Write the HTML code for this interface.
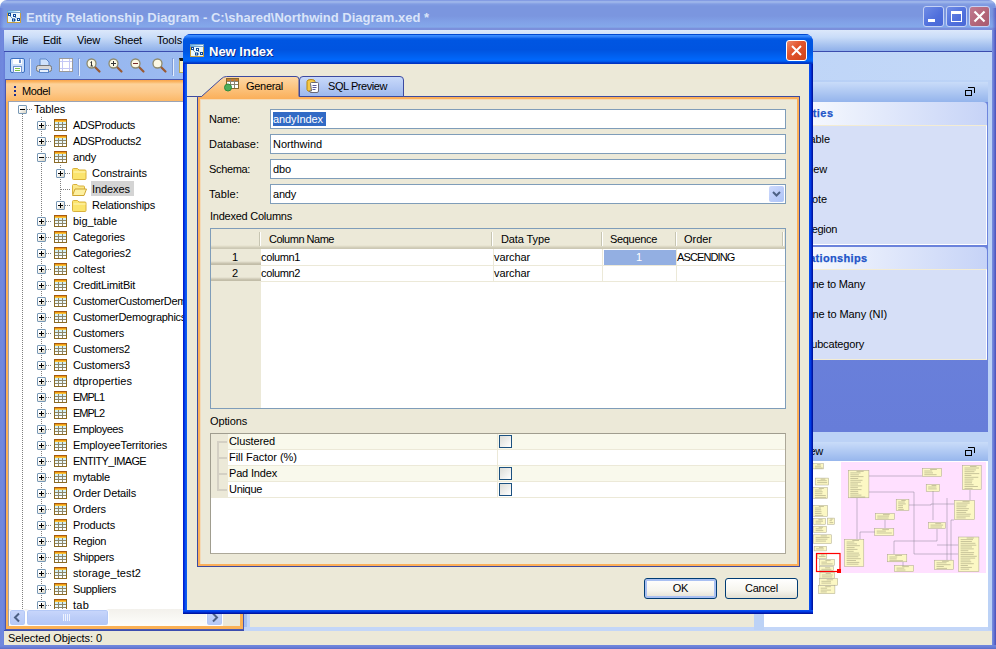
<!DOCTYPE html>
<html><head><meta charset="utf-8"><title>Entity Relationship Diagram</title><style>
*{box-sizing:border-box;margin:0;padding:0}
html,body{width:996px;height:649px;overflow:hidden;background:#fff}
body{font-family:"Liberation Sans",sans-serif;font-size:11px;color:#000;letter-spacing:-0.17px;line-height:13px}
.a{position:absolute}
#root{position:absolute;left:0;top:0;width:996px;height:649px;overflow:hidden;background:#fff}
.t{position:absolute;white-space:pre;height:13px;line-height:13px}
svg{position:absolute;overflow:visible}
</style></head><body><div id="root">
<div class="a" style="left:0px;top:0px;width:996px;height:30px;background:linear-gradient(180deg,#6b83dc 0px,#9db5ea 1px,#9ab2e9 2.5px,#829de3 4px,#7b96df 6px,#7b96df 16px,#81a1e7 22px,#84a8ea 27px,#7b90dc 28.5px,#7a8edb 30px);border-radius:7px 7px 0 0;"></div>
<div class="a" style="left:0px;top:30px;width:5px;height:619px;background:linear-gradient(90deg,#6f86dc,#7088de 50%,#687ed8)"></div>
<div class="a" style="left:992px;top:30px;width:4px;height:619px;background:linear-gradient(90deg,#7a90e0,#6a7bd6 40%,#5560c6 75%,#4a4fb5)"></div>
<div class="a" style="left:0px;top:645px;width:996px;height:4px;background:linear-gradient(180deg,#7088de,#6b80d8 50%,#5a6cc8)"></div>
<div class="a" style="left:992px;top:8px;width:4px;height:22px;background:linear-gradient(90deg,rgba(90,100,200,0),rgba(80,85,190,0.8))"></div>
<div class="a" style="left:0px;top:8px;width:4px;height:22px;background:linear-gradient(90deg,rgba(100,120,215,0.7),rgba(100,120,215,0))"></div>
<svg style="left:7px;top:10px" width="14" height="13" viewBox="0 0 14 13">
<defs><linearGradient id="aig1" x1="0" y1="0" x2="1" y2="0"><stop offset="0" stop-color="#5ab8f0"/><stop offset="1" stop-color="#ffffff"/></linearGradient></defs>
<rect x="0" y="0" width="14" height="3" fill="#6f9fcc"/>
<rect x="1" y="1" width="12" height="1" fill="url(#aig1)"/>
<rect x="0" y="3" width="14" height="10" fill="#c8a040"/>
<rect x="1" y="3" width="12" height="9" fill="#e8f8fc"/>
<path d="M3 6 L6 9 M8 7 L11 9 M8 10 H10" stroke="#2a62a8" stroke-width="1" stroke-dasharray="1 1" fill="none"/>
<rect x="1" y="3" width="3" height="3" fill="#0a4a9c"/><rect x="2" y="4" width="1" height="1" fill="#fff"/>
<rect x="6" y="4" width="3" height="3" fill="#0a4a9c"/><rect x="7" y="5" width="1" height="1" fill="#fff"/>
<rect x="5" y="8.500" width="3" height="3" fill="#0a4a9c"/><rect x="6" y="9.500" width="1" height="1" fill="#fff"/>
<rect x="10" y="8" width="3" height="3" fill="#0a4a9c"/><rect x="11" y="9" width="1" height="1" fill="#fff"/>
</svg>
<div class="t" style="left:26px;top:10px;font-size:13px;font-weight:bold;color:#d9e4f9;letter-spacing:0;height:16px;line-height:16px;">Entity Relationship Diagram - C:\shared\Northwind Diagram.xed *</div>
<div class="a" style="left:923px;top:6px;width:21px;height:21px;background:linear-gradient(135deg,#6f8ce6,#4f6fdc 60%,#4a68d6);border:1px solid #c5d2f5;border-radius:3px;"></div>
<div class="a" style="left:928px;top:19px;width:7px;height:3px;background:#fff"></div>
<div class="a" style="left:946px;top:6px;width:21px;height:21px;background:linear-gradient(135deg,#6f8ce6,#4f6fdc 60%,#4a68d6);border:1px solid #c5d2f5;border-radius:3px;"></div>
<div class="a" style="left:951px;top:11px;width:11px;height:11px;border:1px solid #fff;border-top:3px solid #fff;"></div>
<div class="a" style="left:969px;top:6px;width:21px;height:21px;background:linear-gradient(135deg,#c07a90,#b26478 60%,#a85a70);border:1px solid #c5d2f5;border-radius:3px;"></div>
<svg style="left:974px;top:11px" width="11" height="11" viewBox="0 0 11 11"><path d="M0.5 0.5 L10.5 10.5 M10.5 0.5 L0.5 10.5" stroke="#fff" stroke-width="2.200" fill="none"/></svg>
<div class="a" style="left:4px;top:30px;width:988px;height:21px;background:linear-gradient(180deg,#dce8fb 0%,#c9dcf8 35%,#a9c4f0 70%,#8fb0ea 100%)"></div>
<div class="a" style="left:4px;top:51px;width:988px;height:1px;background:#3b4cae"></div>
<div class="t" style="left:12px;top:34px;letter-spacing:-0.431px;">File</div>
<div class="t" style="left:43px;top:34px;letter-spacing:-0.239px;">Edit</div>
<div class="t" style="left:77px;top:34px;letter-spacing:-0.161px;">View</div>
<div class="t" style="left:114px;top:34px;letter-spacing:-0.149px;">Sheet</div>
<div class="t" style="left:157px;top:34px;letter-spacing:-0.136px;">Tools</div>
<div class="a" style="left:4px;top:52px;width:988px;height:28px;background:linear-gradient(90deg,#90b2ee 0%,#a4c1f2 30%,#bdd4f7 70%,#c3d8f8 100%)"></div>
<div class="a" style="left:4px;top:80px;width:988px;height:550px;background:linear-gradient(90deg,#9dbaf0 0%,#bdd4f7 100%)"></div>
<div class="a" style="left:4px;top:52px;width:1px;height:593px;background:#687ed8"></div>
<svg style="left:10px;top:58px" width="15" height="15" viewBox="0 0 15 15">
<rect x="0.5" y="0.5" width="14" height="14" rx="1.5" fill="#cfe0f8" stroke="#3a6fc0"/>
<rect x="3" y="1" width="9" height="5" fill="#fff"/>
<rect x="9" y="1.5" width="2" height="3.500" fill="#6f93d0"/>
<rect x="3.5" y="8.5" width="8" height="6" fill="#fff" stroke="#6f93d0"/>
<rect x="5" y="10" width="5" height="1" fill="#7fc24a"/><rect x="5" y="12" width="5" height="1" fill="#7fc24a"/>
</svg>
<div class="a" style="left:29px;top:58px;width:1px;height:17px;background:#7f9bd6"></div>
<div class="a" style="left:30px;top:59px;width:1px;height:17px;background:#e6effc"></div>
<svg style="left:36px;top:58px" width="16" height="15" viewBox="0 0 16 15">
<path d="M4 1 h6 l3 3 v4 h-9 z" fill="#cfe2fb" stroke="#5b86c8" stroke-width="1"/>
<rect x="0.5" y="7.5" width="15" height="6" rx="2" fill="#d8d8d8" stroke="#777"/>
<rect x="3.5" y="11.5" width="9" height="3" fill="#e8f0fc" stroke="#5b86c8"/>
</svg>
<svg style="left:59px;top:58px" width="14" height="14" viewBox="0 0 14 14">
<rect x="0.5" y="0.5" width="13" height="13" fill="#fff" stroke="#9a9a9a"/>
<path d="M1 3.5 H13 M1 10.5 H13 M3.500 1 V13 M10.5 1 V13" stroke="#c5c8f5" stroke-width="1"/>
</svg>
<div class="a" style="left:78px;top:58px;width:1px;height:17px;background:#7f9bd6"></div>
<div class="a" style="left:79px;top:59px;width:1px;height:17px;background:#e6effc"></div>
<svg style="left:86px;top:58px" width="15" height="15" viewBox="0 0 15 15">
<path d="M8.500 8.500 L13.500 13.500" stroke="#9a5a32" stroke-width="2.200" stroke-linecap="round"/>
<circle cx="5.500" cy="5.500" r="4.500" fill="#fbf8e4" stroke="#8d8a6e" stroke-width="1.300"/><path d="M4.500 4.500 L5.500 3.500 V8 M4.500 8 H7" stroke="#333" stroke-width="1" fill="none"/></svg>
<svg style="left:108px;top:58px" width="15" height="15" viewBox="0 0 15 15">
<path d="M8.500 8.500 L13.500 13.500" stroke="#9a5a32" stroke-width="2.200" stroke-linecap="round"/>
<circle cx="5.500" cy="5.500" r="4.500" fill="#fbf8e4" stroke="#8d8a6e" stroke-width="1.300"/><path d="M3 5.500 H8 M5.500 3 V8" stroke="#333" stroke-width="1"/></svg>
<svg style="left:130px;top:58px" width="15" height="15" viewBox="0 0 15 15">
<path d="M8.500 8.500 L13.500 13.500" stroke="#9a5a32" stroke-width="2.200" stroke-linecap="round"/>
<circle cx="5.500" cy="5.500" r="4.500" fill="#fbf8e4" stroke="#8d8a6e" stroke-width="1.300"/><path d="M3 5.500 H8" stroke="#7a2a2a" stroke-width="1"/></svg>
<svg style="left:152px;top:58px" width="15" height="15" viewBox="0 0 15 15">
<path d="M8.500 8.500 L13.500 13.500" stroke="#9a5a32" stroke-width="2.200" stroke-linecap="round"/>
<circle cx="5.500" cy="5.500" r="4.500" fill="#fbf8e4" stroke="#8d8a6e" stroke-width="1.300"/></svg>
<div class="a" style="left:172px;top:58px;width:1px;height:17px;background:#7f9bd6"></div>
<div class="a" style="left:173px;top:59px;width:1px;height:17px;background:#e6effc"></div>
<div class="a" style="left:179px;top:58px;width:8px;height:15px;background:#fbf3c0;border:1px solid #b9a85a;border-top:3px solid #111;"></div>
<div class="a" style="left:5px;top:79px;width:239px;height:551px;background:#fbb155;border:1px solid #4a58b0;"></div>
<div class="a" style="left:6px;top:80px;width:237px;height:22px;background:linear-gradient(180deg,#f9a54a 0px,#fbb867 2px,#fdd29a 4px,#fdc98a 12px,#fbb664 22px)"></div>
<div class="a" style="left:14px;top:86px;width:2px;height:2px;background:#1c2c8c"></div>
<div class="a" style="left:14px;top:90px;width:2px;height:2px;background:#1c2c8c"></div>
<div class="a" style="left:14px;top:94px;width:2px;height:2px;background:#1c2c8c"></div>
<div class="t" style="left:22px;top:85px;letter-spacing:-0.392px;">Model</div>
<div class="a" style="left:8px;top:101px;width:232px;height:525px;background:#fff;border:1px solid #9aa3b5;border-right:none"></div>
<div class="a" style="left:9px;top:102px;width:231px;height:507px;overflow:hidden;background:#fff">
<div class="a" style="left:13px;top:12px;width:1px;height:506px;background:repeating-linear-gradient(180deg,#808080 0 1px,transparent 1px 2px)"></div>
<div class="a" style="left:32px;top:15px;width:1px;height:503px;background:repeating-linear-gradient(180deg,#808080 0 1px,transparent 1px 2px)"></div>
<div class="a" style="left:51px;top:63px;width:1px;height:40px;background:repeating-linear-gradient(180deg,#808080 0 1px,transparent 1px 2px)"></div>
<div class="a" style="left:18px;top:7px;width:6px;height:1px;background:repeating-linear-gradient(90deg,#808080 0 1px,transparent 1px 2px)"></div>
<div class="a" style="left:9px;top:3px;width:9px;height:9px;border:1px solid #7898b5;border-radius:1px;background:linear-gradient(135deg,#fff 30%,#d6d2c2)"><div class="a" style="left:1px;top:3px;width:5px;height:1px;background:#000"></div></div>
<div class="t" style="left:25px;top:1px;letter-spacing:-0.133px;">Tables</div>
<div class="a" style="left:37px;top:23px;width:6px;height:1px;background:repeating-linear-gradient(90deg,#808080 0 1px,transparent 1px 2px)"></div>
<div class="a" style="left:28px;top:19px;width:9px;height:9px;border:1px solid #7898b5;border-radius:1px;background:linear-gradient(135deg,#fff 30%,#d6d2c2)"><div class="a" style="left:1px;top:3px;width:5px;height:1px;background:#000"></div><div class="a" style="left:3px;top:1px;width:1px;height:5px;background:#000"></div></div>
<svg style="left:45px;top:17px" width="13" height="12" viewBox="0 0 13 12">
<rect x="0" y="0" width="13" height="12" fill="#8a6a24"/>
<rect x="0" y="0" width="13" height="1" fill="#a85a10"/>
<rect x="1" y="1" width="11" height="1" fill="#ef9a14"/>
<rect x="1" y="2" width="11" height="1" fill="#fcc63a"/>
<rect x="1" y="3" width="11" height="8" fill="#8d8668"/>
<rect x="1" y="3" width="3" height="2" fill="#d2f0f8"/><rect x="5" y="3" width="3" height="2" fill="#d2f0f8"/><rect x="9" y="3" width="3" height="2" fill="#d2f0f8"/>
<rect x="1" y="6" width="3" height="2" fill="#e8f7fb"/><rect x="5" y="6" width="3" height="2" fill="#e8f7fb"/><rect x="9" y="6" width="3" height="2" fill="#e8f7fb"/>
<rect x="1" y="9" width="3" height="2" fill="#fff"/><rect x="5" y="9" width="3" height="2" fill="#fff"/><rect x="9" y="9" width="3" height="2" fill="#fff"/>
</svg>
<div class="t" style="left:64px;top:17px;letter-spacing:-0.366px;">ADSProducts</div>
<div class="a" style="left:37px;top:39px;width:6px;height:1px;background:repeating-linear-gradient(90deg,#808080 0 1px,transparent 1px 2px)"></div>
<div class="a" style="left:28px;top:35px;width:9px;height:9px;border:1px solid #7898b5;border-radius:1px;background:linear-gradient(135deg,#fff 30%,#d6d2c2)"><div class="a" style="left:1px;top:3px;width:5px;height:1px;background:#000"></div><div class="a" style="left:3px;top:1px;width:1px;height:5px;background:#000"></div></div>
<svg style="left:45px;top:33px" width="13" height="12" viewBox="0 0 13 12">
<rect x="0" y="0" width="13" height="12" fill="#8a6a24"/>
<rect x="0" y="0" width="13" height="1" fill="#a85a10"/>
<rect x="1" y="1" width="11" height="1" fill="#ef9a14"/>
<rect x="1" y="2" width="11" height="1" fill="#fcc63a"/>
<rect x="1" y="3" width="11" height="8" fill="#8d8668"/>
<rect x="1" y="3" width="3" height="2" fill="#d2f0f8"/><rect x="5" y="3" width="3" height="2" fill="#d2f0f8"/><rect x="9" y="3" width="3" height="2" fill="#d2f0f8"/>
<rect x="1" y="6" width="3" height="2" fill="#e8f7fb"/><rect x="5" y="6" width="3" height="2" fill="#e8f7fb"/><rect x="9" y="6" width="3" height="2" fill="#e8f7fb"/>
<rect x="1" y="9" width="3" height="2" fill="#fff"/><rect x="5" y="9" width="3" height="2" fill="#fff"/><rect x="9" y="9" width="3" height="2" fill="#fff"/>
</svg>
<div class="t" style="left:64px;top:33px;letter-spacing:-0.345px;">ADSProducts2</div>
<div class="a" style="left:37px;top:55px;width:6px;height:1px;background:repeating-linear-gradient(90deg,#808080 0 1px,transparent 1px 2px)"></div>
<div class="a" style="left:28px;top:51px;width:9px;height:9px;border:1px solid #7898b5;border-radius:1px;background:linear-gradient(135deg,#fff 30%,#d6d2c2)"><div class="a" style="left:1px;top:3px;width:5px;height:1px;background:#000"></div></div>
<svg style="left:45px;top:49px" width="13" height="12" viewBox="0 0 13 12">
<rect x="0" y="0" width="13" height="12" fill="#8a6a24"/>
<rect x="0" y="0" width="13" height="1" fill="#a85a10"/>
<rect x="1" y="1" width="11" height="1" fill="#ef9a14"/>
<rect x="1" y="2" width="11" height="1" fill="#fcc63a"/>
<rect x="1" y="3" width="11" height="8" fill="#8d8668"/>
<rect x="1" y="3" width="3" height="2" fill="#d2f0f8"/><rect x="5" y="3" width="3" height="2" fill="#d2f0f8"/><rect x="9" y="3" width="3" height="2" fill="#d2f0f8"/>
<rect x="1" y="6" width="3" height="2" fill="#e8f7fb"/><rect x="5" y="6" width="3" height="2" fill="#e8f7fb"/><rect x="9" y="6" width="3" height="2" fill="#e8f7fb"/>
<rect x="1" y="9" width="3" height="2" fill="#fff"/><rect x="5" y="9" width="3" height="2" fill="#fff"/><rect x="9" y="9" width="3" height="2" fill="#fff"/>
</svg>
<div class="t" style="left:64px;top:49px;letter-spacing:-0.213px;">andy</div>
<div class="a" style="left:56px;top:71px;width:6px;height:1px;background:repeating-linear-gradient(90deg,#808080 0 1px,transparent 1px 2px)"></div>
<div class="a" style="left:47px;top:67px;width:9px;height:9px;border:1px solid #7898b5;border-radius:1px;background:linear-gradient(135deg,#fff 30%,#d6d2c2)"><div class="a" style="left:1px;top:3px;width:5px;height:1px;background:#000"></div><div class="a" style="left:3px;top:1px;width:1px;height:5px;background:#000"></div></div>
<svg style="left:63px;top:65px" width="15" height="13" viewBox="0 0 15 13">
<path d="M0.5 2.500 q0 -1 1 -1 h4 l1.500 1.500 h6 q1 0 1 1 v7.500 q0 1 -1 1 h-11.500 q-1 0 -1 -1 z" fill="#fbe46c" stroke="#d9b13c"/>
<path d="M1.500 5 h12" stroke="#fff6b8"/>
</svg>
<div class="t" style="left:83px;top:65px;letter-spacing:-0.057px;">Constraints</div>
<div class="a" style="left:52px;top:87px;width:10px;height:1px;background:repeating-linear-gradient(90deg,#808080 0 1px,transparent 1px 2px)"></div>
<svg style="left:62px;top:81px" width="16" height="13" viewBox="0 0 16 13">
<path d="M1.500 11.500 v-9 q0 -1 1 -1 h3.500 l1.500 1.500 h5 q1 0 1 1 v2" fill="#fbe88a" stroke="#d9b13c"/>
<path d="M1.500 12.500 l2.500 -6.500 h11.500 l-2.500 6.500 z" fill="#fdf0a0" stroke="#cfa632"/>
</svg>
<div class="t" style="left:83px;top:81px;background:#d4d4d4;padding:0 4px 0 1px;margin-left:-1px;height:15px;line-height:17px;margin-top:-2px;overflow:hidden;letter-spacing:-0.075px;">Indexes</div>
<div class="a" style="left:56px;top:103px;width:6px;height:1px;background:repeating-linear-gradient(90deg,#808080 0 1px,transparent 1px 2px)"></div>
<div class="a" style="left:47px;top:99px;width:9px;height:9px;border:1px solid #7898b5;border-radius:1px;background:linear-gradient(135deg,#fff 30%,#d6d2c2)"><div class="a" style="left:1px;top:3px;width:5px;height:1px;background:#000"></div><div class="a" style="left:3px;top:1px;width:1px;height:5px;background:#000"></div></div>
<svg style="left:63px;top:97px" width="15" height="13" viewBox="0 0 15 13">
<path d="M0.5 2.500 q0 -1 1 -1 h4 l1.500 1.500 h6 q1 0 1 1 v7.500 q0 1 -1 1 h-11.500 q-1 0 -1 -1 z" fill="#fbe46c" stroke="#d9b13c"/>
<path d="M1.500 5 h12" stroke="#fff6b8"/>
</svg>
<div class="t" style="left:83px;top:97px;letter-spacing:-0.233px;">Relationships</div>
<div class="a" style="left:37px;top:119px;width:6px;height:1px;background:repeating-linear-gradient(90deg,#808080 0 1px,transparent 1px 2px)"></div>
<div class="a" style="left:28px;top:115px;width:9px;height:9px;border:1px solid #7898b5;border-radius:1px;background:linear-gradient(135deg,#fff 30%,#d6d2c2)"><div class="a" style="left:1px;top:3px;width:5px;height:1px;background:#000"></div><div class="a" style="left:3px;top:1px;width:1px;height:5px;background:#000"></div></div>
<svg style="left:45px;top:113px" width="13" height="12" viewBox="0 0 13 12">
<rect x="0" y="0" width="13" height="12" fill="#8a6a24"/>
<rect x="0" y="0" width="13" height="1" fill="#a85a10"/>
<rect x="1" y="1" width="11" height="1" fill="#ef9a14"/>
<rect x="1" y="2" width="11" height="1" fill="#fcc63a"/>
<rect x="1" y="3" width="11" height="8" fill="#8d8668"/>
<rect x="1" y="3" width="3" height="2" fill="#d2f0f8"/><rect x="5" y="3" width="3" height="2" fill="#d2f0f8"/><rect x="9" y="3" width="3" height="2" fill="#d2f0f8"/>
<rect x="1" y="6" width="3" height="2" fill="#e8f7fb"/><rect x="5" y="6" width="3" height="2" fill="#e8f7fb"/><rect x="9" y="6" width="3" height="2" fill="#e8f7fb"/>
<rect x="1" y="9" width="3" height="2" fill="#fff"/><rect x="5" y="9" width="3" height="2" fill="#fff"/><rect x="9" y="9" width="3" height="2" fill="#fff"/>
</svg>
<div class="t" style="left:64px;top:113px;letter-spacing:-0.072px;">big_table</div>
<div class="a" style="left:37px;top:135px;width:6px;height:1px;background:repeating-linear-gradient(90deg,#808080 0 1px,transparent 1px 2px)"></div>
<div class="a" style="left:28px;top:131px;width:9px;height:9px;border:1px solid #7898b5;border-radius:1px;background:linear-gradient(135deg,#fff 30%,#d6d2c2)"><div class="a" style="left:1px;top:3px;width:5px;height:1px;background:#000"></div><div class="a" style="left:3px;top:1px;width:1px;height:5px;background:#000"></div></div>
<svg style="left:45px;top:129px" width="13" height="12" viewBox="0 0 13 12">
<rect x="0" y="0" width="13" height="12" fill="#8a6a24"/>
<rect x="0" y="0" width="13" height="1" fill="#a85a10"/>
<rect x="1" y="1" width="11" height="1" fill="#ef9a14"/>
<rect x="1" y="2" width="11" height="1" fill="#fcc63a"/>
<rect x="1" y="3" width="11" height="8" fill="#8d8668"/>
<rect x="1" y="3" width="3" height="2" fill="#d2f0f8"/><rect x="5" y="3" width="3" height="2" fill="#d2f0f8"/><rect x="9" y="3" width="3" height="2" fill="#d2f0f8"/>
<rect x="1" y="6" width="3" height="2" fill="#e8f7fb"/><rect x="5" y="6" width="3" height="2" fill="#e8f7fb"/><rect x="9" y="6" width="3" height="2" fill="#e8f7fb"/>
<rect x="1" y="9" width="3" height="2" fill="#fff"/><rect x="5" y="9" width="3" height="2" fill="#fff"/><rect x="9" y="9" width="3" height="2" fill="#fff"/>
</svg>
<div class="t" style="left:64px;top:129px;letter-spacing:-0.119px;">Categories</div>
<div class="a" style="left:37px;top:151px;width:6px;height:1px;background:repeating-linear-gradient(90deg,#808080 0 1px,transparent 1px 2px)"></div>
<div class="a" style="left:28px;top:147px;width:9px;height:9px;border:1px solid #7898b5;border-radius:1px;background:linear-gradient(135deg,#fff 30%,#d6d2c2)"><div class="a" style="left:1px;top:3px;width:5px;height:1px;background:#000"></div><div class="a" style="left:3px;top:1px;width:1px;height:5px;background:#000"></div></div>
<svg style="left:45px;top:145px" width="13" height="12" viewBox="0 0 13 12">
<rect x="0" y="0" width="13" height="12" fill="#8a6a24"/>
<rect x="0" y="0" width="13" height="1" fill="#a85a10"/>
<rect x="1" y="1" width="11" height="1" fill="#ef9a14"/>
<rect x="1" y="2" width="11" height="1" fill="#fcc63a"/>
<rect x="1" y="3" width="11" height="8" fill="#8d8668"/>
<rect x="1" y="3" width="3" height="2" fill="#d2f0f8"/><rect x="5" y="3" width="3" height="2" fill="#d2f0f8"/><rect x="9" y="3" width="3" height="2" fill="#d2f0f8"/>
<rect x="1" y="6" width="3" height="2" fill="#e8f7fb"/><rect x="5" y="6" width="3" height="2" fill="#e8f7fb"/><rect x="9" y="6" width="3" height="2" fill="#e8f7fb"/>
<rect x="1" y="9" width="3" height="2" fill="#fff"/><rect x="5" y="9" width="3" height="2" fill="#fff"/><rect x="9" y="9" width="3" height="2" fill="#fff"/>
</svg>
<div class="t" style="left:64px;top:145px;letter-spacing:-0.119px;">Categories2</div>
<div class="a" style="left:37px;top:167px;width:6px;height:1px;background:repeating-linear-gradient(90deg,#808080 0 1px,transparent 1px 2px)"></div>
<div class="a" style="left:28px;top:163px;width:9px;height:9px;border:1px solid #7898b5;border-radius:1px;background:linear-gradient(135deg,#fff 30%,#d6d2c2)"><div class="a" style="left:1px;top:3px;width:5px;height:1px;background:#000"></div><div class="a" style="left:3px;top:1px;width:1px;height:5px;background:#000"></div></div>
<svg style="left:45px;top:161px" width="13" height="12" viewBox="0 0 13 12">
<rect x="0" y="0" width="13" height="12" fill="#8a6a24"/>
<rect x="0" y="0" width="13" height="1" fill="#a85a10"/>
<rect x="1" y="1" width="11" height="1" fill="#ef9a14"/>
<rect x="1" y="2" width="11" height="1" fill="#fcc63a"/>
<rect x="1" y="3" width="11" height="8" fill="#8d8668"/>
<rect x="1" y="3" width="3" height="2" fill="#d2f0f8"/><rect x="5" y="3" width="3" height="2" fill="#d2f0f8"/><rect x="9" y="3" width="3" height="2" fill="#d2f0f8"/>
<rect x="1" y="6" width="3" height="2" fill="#e8f7fb"/><rect x="5" y="6" width="3" height="2" fill="#e8f7fb"/><rect x="9" y="6" width="3" height="2" fill="#e8f7fb"/>
<rect x="1" y="9" width="3" height="2" fill="#fff"/><rect x="5" y="9" width="3" height="2" fill="#fff"/><rect x="9" y="9" width="3" height="2" fill="#fff"/>
</svg>
<div class="t" style="left:64px;top:161px;letter-spacing:0.030px;">coltest</div>
<div class="a" style="left:37px;top:183px;width:6px;height:1px;background:repeating-linear-gradient(90deg,#808080 0 1px,transparent 1px 2px)"></div>
<div class="a" style="left:28px;top:179px;width:9px;height:9px;border:1px solid #7898b5;border-radius:1px;background:linear-gradient(135deg,#fff 30%,#d6d2c2)"><div class="a" style="left:1px;top:3px;width:5px;height:1px;background:#000"></div><div class="a" style="left:3px;top:1px;width:1px;height:5px;background:#000"></div></div>
<svg style="left:45px;top:177px" width="13" height="12" viewBox="0 0 13 12">
<rect x="0" y="0" width="13" height="12" fill="#8a6a24"/>
<rect x="0" y="0" width="13" height="1" fill="#a85a10"/>
<rect x="1" y="1" width="11" height="1" fill="#ef9a14"/>
<rect x="1" y="2" width="11" height="1" fill="#fcc63a"/>
<rect x="1" y="3" width="11" height="8" fill="#8d8668"/>
<rect x="1" y="3" width="3" height="2" fill="#d2f0f8"/><rect x="5" y="3" width="3" height="2" fill="#d2f0f8"/><rect x="9" y="3" width="3" height="2" fill="#d2f0f8"/>
<rect x="1" y="6" width="3" height="2" fill="#e8f7fb"/><rect x="5" y="6" width="3" height="2" fill="#e8f7fb"/><rect x="9" y="6" width="3" height="2" fill="#e8f7fb"/>
<rect x="1" y="9" width="3" height="2" fill="#fff"/><rect x="5" y="9" width="3" height="2" fill="#fff"/><rect x="9" y="9" width="3" height="2" fill="#fff"/>
</svg>
<div class="t" style="left:64px;top:177px;letter-spacing:-0.243px;">CreditLimitBit</div>
<div class="a" style="left:37px;top:199px;width:6px;height:1px;background:repeating-linear-gradient(90deg,#808080 0 1px,transparent 1px 2px)"></div>
<div class="a" style="left:28px;top:195px;width:9px;height:9px;border:1px solid #7898b5;border-radius:1px;background:linear-gradient(135deg,#fff 30%,#d6d2c2)"><div class="a" style="left:1px;top:3px;width:5px;height:1px;background:#000"></div><div class="a" style="left:3px;top:1px;width:1px;height:5px;background:#000"></div></div>
<svg style="left:45px;top:193px" width="13" height="12" viewBox="0 0 13 12">
<rect x="0" y="0" width="13" height="12" fill="#8a6a24"/>
<rect x="0" y="0" width="13" height="1" fill="#a85a10"/>
<rect x="1" y="1" width="11" height="1" fill="#ef9a14"/>
<rect x="1" y="2" width="11" height="1" fill="#fcc63a"/>
<rect x="1" y="3" width="11" height="8" fill="#8d8668"/>
<rect x="1" y="3" width="3" height="2" fill="#d2f0f8"/><rect x="5" y="3" width="3" height="2" fill="#d2f0f8"/><rect x="9" y="3" width="3" height="2" fill="#d2f0f8"/>
<rect x="1" y="6" width="3" height="2" fill="#e8f7fb"/><rect x="5" y="6" width="3" height="2" fill="#e8f7fb"/><rect x="9" y="6" width="3" height="2" fill="#e8f7fb"/>
<rect x="1" y="9" width="3" height="2" fill="#fff"/><rect x="5" y="9" width="3" height="2" fill="#fff"/><rect x="9" y="9" width="3" height="2" fill="#fff"/>
</svg>
<div class="t" style="left:64px;top:193px;letter-spacing:-0.285px;">CustomerCustomerDemo</div>
<div class="a" style="left:37px;top:215px;width:6px;height:1px;background:repeating-linear-gradient(90deg,#808080 0 1px,transparent 1px 2px)"></div>
<div class="a" style="left:28px;top:211px;width:9px;height:9px;border:1px solid #7898b5;border-radius:1px;background:linear-gradient(135deg,#fff 30%,#d6d2c2)"><div class="a" style="left:1px;top:3px;width:5px;height:1px;background:#000"></div><div class="a" style="left:3px;top:1px;width:1px;height:5px;background:#000"></div></div>
<svg style="left:45px;top:209px" width="13" height="12" viewBox="0 0 13 12">
<rect x="0" y="0" width="13" height="12" fill="#8a6a24"/>
<rect x="0" y="0" width="13" height="1" fill="#a85a10"/>
<rect x="1" y="1" width="11" height="1" fill="#ef9a14"/>
<rect x="1" y="2" width="11" height="1" fill="#fcc63a"/>
<rect x="1" y="3" width="11" height="8" fill="#8d8668"/>
<rect x="1" y="3" width="3" height="2" fill="#d2f0f8"/><rect x="5" y="3" width="3" height="2" fill="#d2f0f8"/><rect x="9" y="3" width="3" height="2" fill="#d2f0f8"/>
<rect x="1" y="6" width="3" height="2" fill="#e8f7fb"/><rect x="5" y="6" width="3" height="2" fill="#e8f7fb"/><rect x="9" y="6" width="3" height="2" fill="#e8f7fb"/>
<rect x="1" y="9" width="3" height="2" fill="#fff"/><rect x="5" y="9" width="3" height="2" fill="#fff"/><rect x="9" y="9" width="3" height="2" fill="#fff"/>
</svg>
<div class="t" style="left:64px;top:209px;letter-spacing:-0.280px;">CustomerDemographics</div>
<div class="a" style="left:37px;top:231px;width:6px;height:1px;background:repeating-linear-gradient(90deg,#808080 0 1px,transparent 1px 2px)"></div>
<div class="a" style="left:28px;top:227px;width:9px;height:9px;border:1px solid #7898b5;border-radius:1px;background:linear-gradient(135deg,#fff 30%,#d6d2c2)"><div class="a" style="left:1px;top:3px;width:5px;height:1px;background:#000"></div><div class="a" style="left:3px;top:1px;width:1px;height:5px;background:#000"></div></div>
<svg style="left:45px;top:225px" width="13" height="12" viewBox="0 0 13 12">
<rect x="0" y="0" width="13" height="12" fill="#8a6a24"/>
<rect x="0" y="0" width="13" height="1" fill="#a85a10"/>
<rect x="1" y="1" width="11" height="1" fill="#ef9a14"/>
<rect x="1" y="2" width="11" height="1" fill="#fcc63a"/>
<rect x="1" y="3" width="11" height="8" fill="#8d8668"/>
<rect x="1" y="3" width="3" height="2" fill="#d2f0f8"/><rect x="5" y="3" width="3" height="2" fill="#d2f0f8"/><rect x="9" y="3" width="3" height="2" fill="#d2f0f8"/>
<rect x="1" y="6" width="3" height="2" fill="#e8f7fb"/><rect x="5" y="6" width="3" height="2" fill="#e8f7fb"/><rect x="9" y="6" width="3" height="2" fill="#e8f7fb"/>
<rect x="1" y="9" width="3" height="2" fill="#fff"/><rect x="5" y="9" width="3" height="2" fill="#fff"/><rect x="9" y="9" width="3" height="2" fill="#fff"/>
</svg>
<div class="t" style="left:64px;top:225px;letter-spacing:-0.242px;">Customers</div>
<div class="a" style="left:37px;top:247px;width:6px;height:1px;background:repeating-linear-gradient(90deg,#808080 0 1px,transparent 1px 2px)"></div>
<div class="a" style="left:28px;top:243px;width:9px;height:9px;border:1px solid #7898b5;border-radius:1px;background:linear-gradient(135deg,#fff 30%,#d6d2c2)"><div class="a" style="left:1px;top:3px;width:5px;height:1px;background:#000"></div><div class="a" style="left:3px;top:1px;width:1px;height:5px;background:#000"></div></div>
<svg style="left:45px;top:241px" width="13" height="12" viewBox="0 0 13 12">
<rect x="0" y="0" width="13" height="12" fill="#8a6a24"/>
<rect x="0" y="0" width="13" height="1" fill="#a85a10"/>
<rect x="1" y="1" width="11" height="1" fill="#ef9a14"/>
<rect x="1" y="2" width="11" height="1" fill="#fcc63a"/>
<rect x="1" y="3" width="11" height="8" fill="#8d8668"/>
<rect x="1" y="3" width="3" height="2" fill="#d2f0f8"/><rect x="5" y="3" width="3" height="2" fill="#d2f0f8"/><rect x="9" y="3" width="3" height="2" fill="#d2f0f8"/>
<rect x="1" y="6" width="3" height="2" fill="#e8f7fb"/><rect x="5" y="6" width="3" height="2" fill="#e8f7fb"/><rect x="9" y="6" width="3" height="2" fill="#e8f7fb"/>
<rect x="1" y="9" width="3" height="2" fill="#fff"/><rect x="5" y="9" width="3" height="2" fill="#fff"/><rect x="9" y="9" width="3" height="2" fill="#fff"/>
</svg>
<div class="t" style="left:64px;top:241px;letter-spacing:-0.229px;">Customers2</div>
<div class="a" style="left:37px;top:263px;width:6px;height:1px;background:repeating-linear-gradient(90deg,#808080 0 1px,transparent 1px 2px)"></div>
<div class="a" style="left:28px;top:259px;width:9px;height:9px;border:1px solid #7898b5;border-radius:1px;background:linear-gradient(135deg,#fff 30%,#d6d2c2)"><div class="a" style="left:1px;top:3px;width:5px;height:1px;background:#000"></div><div class="a" style="left:3px;top:1px;width:1px;height:5px;background:#000"></div></div>
<svg style="left:45px;top:257px" width="13" height="12" viewBox="0 0 13 12">
<rect x="0" y="0" width="13" height="12" fill="#8a6a24"/>
<rect x="0" y="0" width="13" height="1" fill="#a85a10"/>
<rect x="1" y="1" width="11" height="1" fill="#ef9a14"/>
<rect x="1" y="2" width="11" height="1" fill="#fcc63a"/>
<rect x="1" y="3" width="11" height="8" fill="#8d8668"/>
<rect x="1" y="3" width="3" height="2" fill="#d2f0f8"/><rect x="5" y="3" width="3" height="2" fill="#d2f0f8"/><rect x="9" y="3" width="3" height="2" fill="#d2f0f8"/>
<rect x="1" y="6" width="3" height="2" fill="#e8f7fb"/><rect x="5" y="6" width="3" height="2" fill="#e8f7fb"/><rect x="9" y="6" width="3" height="2" fill="#e8f7fb"/>
<rect x="1" y="9" width="3" height="2" fill="#fff"/><rect x="5" y="9" width="3" height="2" fill="#fff"/><rect x="9" y="9" width="3" height="2" fill="#fff"/>
</svg>
<div class="t" style="left:64px;top:257px;letter-spacing:-0.229px;">Customers3</div>
<div class="a" style="left:37px;top:279px;width:6px;height:1px;background:repeating-linear-gradient(90deg,#808080 0 1px,transparent 1px 2px)"></div>
<div class="a" style="left:28px;top:275px;width:9px;height:9px;border:1px solid #7898b5;border-radius:1px;background:linear-gradient(135deg,#fff 30%,#d6d2c2)"><div class="a" style="left:1px;top:3px;width:5px;height:1px;background:#000"></div><div class="a" style="left:3px;top:1px;width:1px;height:5px;background:#000"></div></div>
<svg style="left:45px;top:273px" width="13" height="12" viewBox="0 0 13 12">
<rect x="0" y="0" width="13" height="12" fill="#8a6a24"/>
<rect x="0" y="0" width="13" height="1" fill="#a85a10"/>
<rect x="1" y="1" width="11" height="1" fill="#ef9a14"/>
<rect x="1" y="2" width="11" height="1" fill="#fcc63a"/>
<rect x="1" y="3" width="11" height="8" fill="#8d8668"/>
<rect x="1" y="3" width="3" height="2" fill="#d2f0f8"/><rect x="5" y="3" width="3" height="2" fill="#d2f0f8"/><rect x="9" y="3" width="3" height="2" fill="#d2f0f8"/>
<rect x="1" y="6" width="3" height="2" fill="#e8f7fb"/><rect x="5" y="6" width="3" height="2" fill="#e8f7fb"/><rect x="9" y="6" width="3" height="2" fill="#e8f7fb"/>
<rect x="1" y="9" width="3" height="2" fill="#fff"/><rect x="5" y="9" width="3" height="2" fill="#fff"/><rect x="9" y="9" width="3" height="2" fill="#fff"/>
</svg>
<div class="t" style="left:64px;top:273px;letter-spacing:0.076px;">dtproperties</div>
<div class="a" style="left:37px;top:295px;width:6px;height:1px;background:repeating-linear-gradient(90deg,#808080 0 1px,transparent 1px 2px)"></div>
<div class="a" style="left:28px;top:291px;width:9px;height:9px;border:1px solid #7898b5;border-radius:1px;background:linear-gradient(135deg,#fff 30%,#d6d2c2)"><div class="a" style="left:1px;top:3px;width:5px;height:1px;background:#000"></div><div class="a" style="left:3px;top:1px;width:1px;height:5px;background:#000"></div></div>
<svg style="left:45px;top:289px" width="13" height="12" viewBox="0 0 13 12">
<rect x="0" y="0" width="13" height="12" fill="#8a6a24"/>
<rect x="0" y="0" width="13" height="1" fill="#a85a10"/>
<rect x="1" y="1" width="11" height="1" fill="#ef9a14"/>
<rect x="1" y="2" width="11" height="1" fill="#fcc63a"/>
<rect x="1" y="3" width="11" height="8" fill="#8d8668"/>
<rect x="1" y="3" width="3" height="2" fill="#d2f0f8"/><rect x="5" y="3" width="3" height="2" fill="#d2f0f8"/><rect x="9" y="3" width="3" height="2" fill="#d2f0f8"/>
<rect x="1" y="6" width="3" height="2" fill="#e8f7fb"/><rect x="5" y="6" width="3" height="2" fill="#e8f7fb"/><rect x="9" y="6" width="3" height="2" fill="#e8f7fb"/>
<rect x="1" y="9" width="3" height="2" fill="#fff"/><rect x="5" y="9" width="3" height="2" fill="#fff"/><rect x="9" y="9" width="3" height="2" fill="#fff"/>
</svg>
<div class="t" style="left:64px;top:289px;letter-spacing:-1.014px;">EMPL1</div>
<div class="a" style="left:37px;top:311px;width:6px;height:1px;background:repeating-linear-gradient(90deg,#808080 0 1px,transparent 1px 2px)"></div>
<div class="a" style="left:28px;top:307px;width:9px;height:9px;border:1px solid #7898b5;border-radius:1px;background:linear-gradient(135deg,#fff 30%,#d6d2c2)"><div class="a" style="left:1px;top:3px;width:5px;height:1px;background:#000"></div><div class="a" style="left:3px;top:1px;width:1px;height:5px;background:#000"></div></div>
<svg style="left:45px;top:305px" width="13" height="12" viewBox="0 0 13 12">
<rect x="0" y="0" width="13" height="12" fill="#8a6a24"/>
<rect x="0" y="0" width="13" height="1" fill="#a85a10"/>
<rect x="1" y="1" width="11" height="1" fill="#ef9a14"/>
<rect x="1" y="2" width="11" height="1" fill="#fcc63a"/>
<rect x="1" y="3" width="11" height="8" fill="#8d8668"/>
<rect x="1" y="3" width="3" height="2" fill="#d2f0f8"/><rect x="5" y="3" width="3" height="2" fill="#d2f0f8"/><rect x="9" y="3" width="3" height="2" fill="#d2f0f8"/>
<rect x="1" y="6" width="3" height="2" fill="#e8f7fb"/><rect x="5" y="6" width="3" height="2" fill="#e8f7fb"/><rect x="9" y="6" width="3" height="2" fill="#e8f7fb"/>
<rect x="1" y="9" width="3" height="2" fill="#fff"/><rect x="5" y="9" width="3" height="2" fill="#fff"/><rect x="9" y="9" width="3" height="2" fill="#fff"/>
</svg>
<div class="t" style="left:64px;top:305px;letter-spacing:-1.014px;">EMPL2</div>
<div class="a" style="left:37px;top:327px;width:6px;height:1px;background:repeating-linear-gradient(90deg,#808080 0 1px,transparent 1px 2px)"></div>
<div class="a" style="left:28px;top:323px;width:9px;height:9px;border:1px solid #7898b5;border-radius:1px;background:linear-gradient(135deg,#fff 30%,#d6d2c2)"><div class="a" style="left:1px;top:3px;width:5px;height:1px;background:#000"></div><div class="a" style="left:3px;top:1px;width:1px;height:5px;background:#000"></div></div>
<svg style="left:45px;top:321px" width="13" height="12" viewBox="0 0 13 12">
<rect x="0" y="0" width="13" height="12" fill="#8a6a24"/>
<rect x="0" y="0" width="13" height="1" fill="#a85a10"/>
<rect x="1" y="1" width="11" height="1" fill="#ef9a14"/>
<rect x="1" y="2" width="11" height="1" fill="#fcc63a"/>
<rect x="1" y="3" width="11" height="8" fill="#8d8668"/>
<rect x="1" y="3" width="3" height="2" fill="#d2f0f8"/><rect x="5" y="3" width="3" height="2" fill="#d2f0f8"/><rect x="9" y="3" width="3" height="2" fill="#d2f0f8"/>
<rect x="1" y="6" width="3" height="2" fill="#e8f7fb"/><rect x="5" y="6" width="3" height="2" fill="#e8f7fb"/><rect x="9" y="6" width="3" height="2" fill="#e8f7fb"/>
<rect x="1" y="9" width="3" height="2" fill="#fff"/><rect x="5" y="9" width="3" height="2" fill="#fff"/><rect x="9" y="9" width="3" height="2" fill="#fff"/>
</svg>
<div class="t" style="left:64px;top:321px;letter-spacing:-0.490px;">Employees</div>
<div class="a" style="left:37px;top:343px;width:6px;height:1px;background:repeating-linear-gradient(90deg,#808080 0 1px,transparent 1px 2px)"></div>
<div class="a" style="left:28px;top:339px;width:9px;height:9px;border:1px solid #7898b5;border-radius:1px;background:linear-gradient(135deg,#fff 30%,#d6d2c2)"><div class="a" style="left:1px;top:3px;width:5px;height:1px;background:#000"></div><div class="a" style="left:3px;top:1px;width:1px;height:5px;background:#000"></div></div>
<svg style="left:45px;top:337px" width="13" height="12" viewBox="0 0 13 12">
<rect x="0" y="0" width="13" height="12" fill="#8a6a24"/>
<rect x="0" y="0" width="13" height="1" fill="#a85a10"/>
<rect x="1" y="1" width="11" height="1" fill="#ef9a14"/>
<rect x="1" y="2" width="11" height="1" fill="#fcc63a"/>
<rect x="1" y="3" width="11" height="8" fill="#8d8668"/>
<rect x="1" y="3" width="3" height="2" fill="#d2f0f8"/><rect x="5" y="3" width="3" height="2" fill="#d2f0f8"/><rect x="9" y="3" width="3" height="2" fill="#d2f0f8"/>
<rect x="1" y="6" width="3" height="2" fill="#e8f7fb"/><rect x="5" y="6" width="3" height="2" fill="#e8f7fb"/><rect x="9" y="6" width="3" height="2" fill="#e8f7fb"/>
<rect x="1" y="9" width="3" height="2" fill="#fff"/><rect x="5" y="9" width="3" height="2" fill="#fff"/><rect x="9" y="9" width="3" height="2" fill="#fff"/>
</svg>
<div class="t" style="left:64px;top:337px;letter-spacing:-0.168px;">EmployeeTerritories</div>
<div class="a" style="left:37px;top:359px;width:6px;height:1px;background:repeating-linear-gradient(90deg,#808080 0 1px,transparent 1px 2px)"></div>
<div class="a" style="left:28px;top:355px;width:9px;height:9px;border:1px solid #7898b5;border-radius:1px;background:linear-gradient(135deg,#fff 30%,#d6d2c2)"><div class="a" style="left:1px;top:3px;width:5px;height:1px;background:#000"></div><div class="a" style="left:3px;top:1px;width:1px;height:5px;background:#000"></div></div>
<svg style="left:45px;top:353px" width="13" height="12" viewBox="0 0 13 12">
<rect x="0" y="0" width="13" height="12" fill="#8a6a24"/>
<rect x="0" y="0" width="13" height="1" fill="#a85a10"/>
<rect x="1" y="1" width="11" height="1" fill="#ef9a14"/>
<rect x="1" y="2" width="11" height="1" fill="#fcc63a"/>
<rect x="1" y="3" width="11" height="8" fill="#8d8668"/>
<rect x="1" y="3" width="3" height="2" fill="#d2f0f8"/><rect x="5" y="3" width="3" height="2" fill="#d2f0f8"/><rect x="9" y="3" width="3" height="2" fill="#d2f0f8"/>
<rect x="1" y="6" width="3" height="2" fill="#e8f7fb"/><rect x="5" y="6" width="3" height="2" fill="#e8f7fb"/><rect x="9" y="6" width="3" height="2" fill="#e8f7fb"/>
<rect x="1" y="9" width="3" height="2" fill="#fff"/><rect x="5" y="9" width="3" height="2" fill="#fff"/><rect x="9" y="9" width="3" height="2" fill="#fff"/>
</svg>
<div class="t" style="left:64px;top:353px;letter-spacing:-0.640px;">ENTITY_IMAGE</div>
<div class="a" style="left:37px;top:375px;width:6px;height:1px;background:repeating-linear-gradient(90deg,#808080 0 1px,transparent 1px 2px)"></div>
<div class="a" style="left:28px;top:371px;width:9px;height:9px;border:1px solid #7898b5;border-radius:1px;background:linear-gradient(135deg,#fff 30%,#d6d2c2)"><div class="a" style="left:1px;top:3px;width:5px;height:1px;background:#000"></div><div class="a" style="left:3px;top:1px;width:1px;height:5px;background:#000"></div></div>
<svg style="left:45px;top:369px" width="13" height="12" viewBox="0 0 13 12">
<rect x="0" y="0" width="13" height="12" fill="#8a6a24"/>
<rect x="0" y="0" width="13" height="1" fill="#a85a10"/>
<rect x="1" y="1" width="11" height="1" fill="#ef9a14"/>
<rect x="1" y="2" width="11" height="1" fill="#fcc63a"/>
<rect x="1" y="3" width="11" height="8" fill="#8d8668"/>
<rect x="1" y="3" width="3" height="2" fill="#d2f0f8"/><rect x="5" y="3" width="3" height="2" fill="#d2f0f8"/><rect x="9" y="3" width="3" height="2" fill="#d2f0f8"/>
<rect x="1" y="6" width="3" height="2" fill="#e8f7fb"/><rect x="5" y="6" width="3" height="2" fill="#e8f7fb"/><rect x="9" y="6" width="3" height="2" fill="#e8f7fb"/>
<rect x="1" y="9" width="3" height="2" fill="#fff"/><rect x="5" y="9" width="3" height="2" fill="#fff"/><rect x="9" y="9" width="3" height="2" fill="#fff"/>
</svg>
<div class="t" style="left:64px;top:369px;letter-spacing:-0.216px;">mytable</div>
<div class="a" style="left:37px;top:391px;width:6px;height:1px;background:repeating-linear-gradient(90deg,#808080 0 1px,transparent 1px 2px)"></div>
<div class="a" style="left:28px;top:387px;width:9px;height:9px;border:1px solid #7898b5;border-radius:1px;background:linear-gradient(135deg,#fff 30%,#d6d2c2)"><div class="a" style="left:1px;top:3px;width:5px;height:1px;background:#000"></div><div class="a" style="left:3px;top:1px;width:1px;height:5px;background:#000"></div></div>
<svg style="left:45px;top:385px" width="13" height="12" viewBox="0 0 13 12">
<rect x="0" y="0" width="13" height="12" fill="#8a6a24"/>
<rect x="0" y="0" width="13" height="1" fill="#a85a10"/>
<rect x="1" y="1" width="11" height="1" fill="#ef9a14"/>
<rect x="1" y="2" width="11" height="1" fill="#fcc63a"/>
<rect x="1" y="3" width="11" height="8" fill="#8d8668"/>
<rect x="1" y="3" width="3" height="2" fill="#d2f0f8"/><rect x="5" y="3" width="3" height="2" fill="#d2f0f8"/><rect x="9" y="3" width="3" height="2" fill="#d2f0f8"/>
<rect x="1" y="6" width="3" height="2" fill="#e8f7fb"/><rect x="5" y="6" width="3" height="2" fill="#e8f7fb"/><rect x="9" y="6" width="3" height="2" fill="#e8f7fb"/>
<rect x="1" y="9" width="3" height="2" fill="#fff"/><rect x="5" y="9" width="3" height="2" fill="#fff"/><rect x="9" y="9" width="3" height="2" fill="#fff"/>
</svg>
<div class="t" style="left:64px;top:385px;letter-spacing:-0.138px;">Order Details</div>
<div class="a" style="left:37px;top:407px;width:6px;height:1px;background:repeating-linear-gradient(90deg,#808080 0 1px,transparent 1px 2px)"></div>
<div class="a" style="left:28px;top:403px;width:9px;height:9px;border:1px solid #7898b5;border-radius:1px;background:linear-gradient(135deg,#fff 30%,#d6d2c2)"><div class="a" style="left:1px;top:3px;width:5px;height:1px;background:#000"></div><div class="a" style="left:3px;top:1px;width:1px;height:5px;background:#000"></div></div>
<svg style="left:45px;top:401px" width="13" height="12" viewBox="0 0 13 12">
<rect x="0" y="0" width="13" height="12" fill="#8a6a24"/>
<rect x="0" y="0" width="13" height="1" fill="#a85a10"/>
<rect x="1" y="1" width="11" height="1" fill="#ef9a14"/>
<rect x="1" y="2" width="11" height="1" fill="#fcc63a"/>
<rect x="1" y="3" width="11" height="8" fill="#8d8668"/>
<rect x="1" y="3" width="3" height="2" fill="#d2f0f8"/><rect x="5" y="3" width="3" height="2" fill="#d2f0f8"/><rect x="9" y="3" width="3" height="2" fill="#d2f0f8"/>
<rect x="1" y="6" width="3" height="2" fill="#e8f7fb"/><rect x="5" y="6" width="3" height="2" fill="#e8f7fb"/><rect x="9" y="6" width="3" height="2" fill="#e8f7fb"/>
<rect x="1" y="9" width="3" height="2" fill="#fff"/><rect x="5" y="9" width="3" height="2" fill="#fff"/><rect x="9" y="9" width="3" height="2" fill="#fff"/>
</svg>
<div class="t" style="left:64px;top:401px;letter-spacing:-0.103px;">Orders</div>
<div class="a" style="left:37px;top:423px;width:6px;height:1px;background:repeating-linear-gradient(90deg,#808080 0 1px,transparent 1px 2px)"></div>
<div class="a" style="left:28px;top:419px;width:9px;height:9px;border:1px solid #7898b5;border-radius:1px;background:linear-gradient(135deg,#fff 30%,#d6d2c2)"><div class="a" style="left:1px;top:3px;width:5px;height:1px;background:#000"></div><div class="a" style="left:3px;top:1px;width:1px;height:5px;background:#000"></div></div>
<svg style="left:45px;top:417px" width="13" height="12" viewBox="0 0 13 12">
<rect x="0" y="0" width="13" height="12" fill="#8a6a24"/>
<rect x="0" y="0" width="13" height="1" fill="#a85a10"/>
<rect x="1" y="1" width="11" height="1" fill="#ef9a14"/>
<rect x="1" y="2" width="11" height="1" fill="#fcc63a"/>
<rect x="1" y="3" width="11" height="8" fill="#8d8668"/>
<rect x="1" y="3" width="3" height="2" fill="#d2f0f8"/><rect x="5" y="3" width="3" height="2" fill="#d2f0f8"/><rect x="9" y="3" width="3" height="2" fill="#d2f0f8"/>
<rect x="1" y="6" width="3" height="2" fill="#e8f7fb"/><rect x="5" y="6" width="3" height="2" fill="#e8f7fb"/><rect x="9" y="6" width="3" height="2" fill="#e8f7fb"/>
<rect x="1" y="9" width="3" height="2" fill="#fff"/><rect x="5" y="9" width="3" height="2" fill="#fff"/><rect x="9" y="9" width="3" height="2" fill="#fff"/>
</svg>
<div class="t" style="left:64px;top:417px;letter-spacing:-0.176px;">Products</div>
<div class="a" style="left:37px;top:439px;width:6px;height:1px;background:repeating-linear-gradient(90deg,#808080 0 1px,transparent 1px 2px)"></div>
<div class="a" style="left:28px;top:435px;width:9px;height:9px;border:1px solid #7898b5;border-radius:1px;background:linear-gradient(135deg,#fff 30%,#d6d2c2)"><div class="a" style="left:1px;top:3px;width:5px;height:1px;background:#000"></div><div class="a" style="left:3px;top:1px;width:1px;height:5px;background:#000"></div></div>
<svg style="left:45px;top:433px" width="13" height="12" viewBox="0 0 13 12">
<rect x="0" y="0" width="13" height="12" fill="#8a6a24"/>
<rect x="0" y="0" width="13" height="1" fill="#a85a10"/>
<rect x="1" y="1" width="11" height="1" fill="#ef9a14"/>
<rect x="1" y="2" width="11" height="1" fill="#fcc63a"/>
<rect x="1" y="3" width="11" height="8" fill="#8d8668"/>
<rect x="1" y="3" width="3" height="2" fill="#d2f0f8"/><rect x="5" y="3" width="3" height="2" fill="#d2f0f8"/><rect x="9" y="3" width="3" height="2" fill="#d2f0f8"/>
<rect x="1" y="6" width="3" height="2" fill="#e8f7fb"/><rect x="5" y="6" width="3" height="2" fill="#e8f7fb"/><rect x="9" y="6" width="3" height="2" fill="#e8f7fb"/>
<rect x="1" y="9" width="3" height="2" fill="#fff"/><rect x="5" y="9" width="3" height="2" fill="#fff"/><rect x="9" y="9" width="3" height="2" fill="#fff"/>
</svg>
<div class="t" style="left:64px;top:433px;letter-spacing:-0.309px;">Region</div>
<div class="a" style="left:37px;top:455px;width:6px;height:1px;background:repeating-linear-gradient(90deg,#808080 0 1px,transparent 1px 2px)"></div>
<div class="a" style="left:28px;top:451px;width:9px;height:9px;border:1px solid #7898b5;border-radius:1px;background:linear-gradient(135deg,#fff 30%,#d6d2c2)"><div class="a" style="left:1px;top:3px;width:5px;height:1px;background:#000"></div><div class="a" style="left:3px;top:1px;width:1px;height:5px;background:#000"></div></div>
<svg style="left:45px;top:449px" width="13" height="12" viewBox="0 0 13 12">
<rect x="0" y="0" width="13" height="12" fill="#8a6a24"/>
<rect x="0" y="0" width="13" height="1" fill="#a85a10"/>
<rect x="1" y="1" width="11" height="1" fill="#ef9a14"/>
<rect x="1" y="2" width="11" height="1" fill="#fcc63a"/>
<rect x="1" y="3" width="11" height="8" fill="#8d8668"/>
<rect x="1" y="3" width="3" height="2" fill="#d2f0f8"/><rect x="5" y="3" width="3" height="2" fill="#d2f0f8"/><rect x="9" y="3" width="3" height="2" fill="#d2f0f8"/>
<rect x="1" y="6" width="3" height="2" fill="#e8f7fb"/><rect x="5" y="6" width="3" height="2" fill="#e8f7fb"/><rect x="9" y="6" width="3" height="2" fill="#e8f7fb"/>
<rect x="1" y="9" width="3" height="2" fill="#fff"/><rect x="5" y="9" width="3" height="2" fill="#fff"/><rect x="9" y="9" width="3" height="2" fill="#fff"/>
</svg>
<div class="t" style="left:64px;top:449px;letter-spacing:-0.302px;">Shippers</div>
<div class="a" style="left:37px;top:471px;width:6px;height:1px;background:repeating-linear-gradient(90deg,#808080 0 1px,transparent 1px 2px)"></div>
<div class="a" style="left:28px;top:467px;width:9px;height:9px;border:1px solid #7898b5;border-radius:1px;background:linear-gradient(135deg,#fff 30%,#d6d2c2)"><div class="a" style="left:1px;top:3px;width:5px;height:1px;background:#000"></div><div class="a" style="left:3px;top:1px;width:1px;height:5px;background:#000"></div></div>
<svg style="left:45px;top:465px" width="13" height="12" viewBox="0 0 13 12">
<rect x="0" y="0" width="13" height="12" fill="#8a6a24"/>
<rect x="0" y="0" width="13" height="1" fill="#a85a10"/>
<rect x="1" y="1" width="11" height="1" fill="#ef9a14"/>
<rect x="1" y="2" width="11" height="1" fill="#fcc63a"/>
<rect x="1" y="3" width="11" height="8" fill="#8d8668"/>
<rect x="1" y="3" width="3" height="2" fill="#d2f0f8"/><rect x="5" y="3" width="3" height="2" fill="#d2f0f8"/><rect x="9" y="3" width="3" height="2" fill="#d2f0f8"/>
<rect x="1" y="6" width="3" height="2" fill="#e8f7fb"/><rect x="5" y="6" width="3" height="2" fill="#e8f7fb"/><rect x="9" y="6" width="3" height="2" fill="#e8f7fb"/>
<rect x="1" y="9" width="3" height="2" fill="#fff"/><rect x="5" y="9" width="3" height="2" fill="#fff"/><rect x="9" y="9" width="3" height="2" fill="#fff"/>
</svg>
<div class="t" style="left:64px;top:465px;letter-spacing:0.104px;">storage_test2</div>
<div class="a" style="left:37px;top:487px;width:6px;height:1px;background:repeating-linear-gradient(90deg,#808080 0 1px,transparent 1px 2px)"></div>
<div class="a" style="left:28px;top:483px;width:9px;height:9px;border:1px solid #7898b5;border-radius:1px;background:linear-gradient(135deg,#fff 30%,#d6d2c2)"><div class="a" style="left:1px;top:3px;width:5px;height:1px;background:#000"></div><div class="a" style="left:3px;top:1px;width:1px;height:5px;background:#000"></div></div>
<svg style="left:45px;top:481px" width="13" height="12" viewBox="0 0 13 12">
<rect x="0" y="0" width="13" height="12" fill="#8a6a24"/>
<rect x="0" y="0" width="13" height="1" fill="#a85a10"/>
<rect x="1" y="1" width="11" height="1" fill="#ef9a14"/>
<rect x="1" y="2" width="11" height="1" fill="#fcc63a"/>
<rect x="1" y="3" width="11" height="8" fill="#8d8668"/>
<rect x="1" y="3" width="3" height="2" fill="#d2f0f8"/><rect x="5" y="3" width="3" height="2" fill="#d2f0f8"/><rect x="9" y="3" width="3" height="2" fill="#d2f0f8"/>
<rect x="1" y="6" width="3" height="2" fill="#e8f7fb"/><rect x="5" y="6" width="3" height="2" fill="#e8f7fb"/><rect x="9" y="6" width="3" height="2" fill="#e8f7fb"/>
<rect x="1" y="9" width="3" height="2" fill="#fff"/><rect x="5" y="9" width="3" height="2" fill="#fff"/><rect x="9" y="9" width="3" height="2" fill="#fff"/>
</svg>
<div class="t" style="left:64px;top:481px;letter-spacing:-0.317px;">Suppliers</div>
<div class="a" style="left:37px;top:503px;width:6px;height:1px;background:repeating-linear-gradient(90deg,#808080 0 1px,transparent 1px 2px)"></div>
<div class="a" style="left:28px;top:499px;width:9px;height:9px;border:1px solid #7898b5;border-radius:1px;background:linear-gradient(135deg,#fff 30%,#d6d2c2)"><div class="a" style="left:1px;top:3px;width:5px;height:1px;background:#000"></div><div class="a" style="left:3px;top:1px;width:1px;height:5px;background:#000"></div></div>
<svg style="left:45px;top:497px" width="13" height="12" viewBox="0 0 13 12">
<rect x="0" y="0" width="13" height="12" fill="#8a6a24"/>
<rect x="0" y="0" width="13" height="1" fill="#a85a10"/>
<rect x="1" y="1" width="11" height="1" fill="#ef9a14"/>
<rect x="1" y="2" width="11" height="1" fill="#fcc63a"/>
<rect x="1" y="3" width="11" height="8" fill="#8d8668"/>
<rect x="1" y="3" width="3" height="2" fill="#d2f0f8"/><rect x="5" y="3" width="3" height="2" fill="#d2f0f8"/><rect x="9" y="3" width="3" height="2" fill="#d2f0f8"/>
<rect x="1" y="6" width="3" height="2" fill="#e8f7fb"/><rect x="5" y="6" width="3" height="2" fill="#e8f7fb"/><rect x="9" y="6" width="3" height="2" fill="#e8f7fb"/>
<rect x="1" y="9" width="3" height="2" fill="#fff"/><rect x="5" y="9" width="3" height="2" fill="#fff"/><rect x="9" y="9" width="3" height="2" fill="#fff"/>
</svg>
<div class="t" style="left:64px;top:497px;letter-spacing:0.236px;">tab</div>
</div>
<div class="a" style="left:9px;top:609px;width:231px;height:17px;background:linear-gradient(180deg,#f3f1ec,#fefefb)"></div>
<div class="a" style="left:9px;top:609px;width:17px;height:17px;background:linear-gradient(180deg,#c8d6fb,#b6c9f6);border:1px solid #fff;border-radius:3px;box-shadow:inset 0 0 0 1px #b4c8f6"></div>
<svg style="left:13px;top:613px" width="8" height="9" viewBox="0 0 8 9"><path d="M6 0.5 L2 4.500 L6 8.500" stroke="#4d6185" stroke-width="2" fill="none"/></svg>
<div class="a" style="left:206px;top:609px;width:17px;height:17px;background:linear-gradient(180deg,#c8d6fb,#b6c9f6);border:1px solid #fff;border-radius:3px;box-shadow:inset 0 0 0 1px #b4c8f6"></div>
<svg style="left:211px;top:613px" width="8" height="9" viewBox="0 0 8 9"><path d="M2 0.5 L6 4.500 L2 8.500" stroke="#4d6185" stroke-width="2" fill="none"/></svg>
<div class="a" style="left:26px;top:609px;width:83px;height:17px;background:linear-gradient(180deg,#c9d7fc,#bccdf8 50%,#b4c7f6);border:1px solid #fff;border-radius:3px;box-shadow:inset 0 0 0 1px #b4c8f6"></div>
<div class="a" style="left:63px;top:614px;width:1px;height:7px;background:#eef3fe"></div>
<div class="a" style="left:65px;top:614px;width:1px;height:7px;background:#eef3fe"></div>
<div class="a" style="left:67px;top:614px;width:1px;height:7px;background:#eef3fe"></div>
<div class="a" style="left:69px;top:614px;width:1px;height:7px;background:#eef3fe"></div>
<div class="a" style="left:223px;top:609px;width:17px;height:17px;background:#ece9d8"></div>
<div class="a" style="left:247px;top:80px;width:3px;height:550px;background:#c3d6f8"></div>
<div class="a" style="left:250px;top:83px;width:504px;height:544px;background:#ece9d8"></div>
<div class="a" style="left:244px;top:627px;width:748px;height:4px;background:#c3d6f8"></div>
<div class="a" style="left:754px;top:80px;width:10px;height:550px;background:#bcd2f6"></div>
<div class="a" style="left:764px;top:82px;width:224px;height:20px;background:linear-gradient(180deg,#c9dcf9 0%,#b4ccf4 40%,#94b4ec 100%)"></div>
<svg style="left:965px;top:87px" width="10" height="10" viewBox="0 0 10 10"><path d="M3 0.5 H9.500 V6" stroke="#000" fill="none"/><rect x="0.5" y="3.500" width="6" height="5" fill="none" stroke="#000"/></svg>
<div class="a" style="left:764px;top:102px;width:224px;height:330px;background:linear-gradient(180deg,#6d86dd,#6a81db 60%,#677dd9)"></div>
<div class="a" style="left:764px;top:102px;width:223px;height:23px;background:linear-gradient(90deg,#ffffff 0%,#f0f4fd 30%,#c6d3f7 100%);border-radius:0 4px 0 0"></div>
<div class="t" style="left:790px;top:107px;letter-spacing:0.471px;font-weight:bold;color:#1f55c8;-webkit-text-stroke:0.25px #1f55c8;">Entities</div>
<div class="a" style="left:764px;top:125px;width:223px;height:120px;background:#d6dff7;border:1px solid #fff;border-top-color:#f3ecd3"></div>
<div class="t" style="left:804px;top:133px;letter-spacing:-0.059px;">Table</div>
<div class="t" style="left:804px;top:163px;letter-spacing:-0.161px;">View</div>
<div class="t" style="left:804px;top:193px;letter-spacing:-0.059px;">Note</div>
<div class="t" style="left:804px;top:223px;letter-spacing:-0.309px;">Region</div>
<div class="a" style="left:764px;top:247px;width:223px;height:22px;background:linear-gradient(90deg,#ffffff 0%,#f0f4fd 30%,#c6d3f7 100%);border-radius:0 4px 0 0"></div>
<div class="t" style="left:791px;top:252px;letter-spacing:0.337px;font-weight:bold;color:#1f55c8;-webkit-text-stroke:0.25px #1f55c8;">Relationships</div>
<div class="a" style="left:764px;top:269px;width:223px;height:91px;background:#d6dff7;border:1px solid #fff;border-top-color:#f3ecd3;border-bottom-color:#f3ecd3"></div>
<div class="t" style="left:804px;top:278px;letter-spacing:-0.179px;">One to Many</div>
<div class="t" style="left:804px;top:308px;letter-spacing:-0.085px;">One to Many (NI)</div>
<div class="t" style="left:804px;top:338px;letter-spacing:-0.160px;">Subcategory</div>
<div class="a" style="left:764px;top:432px;width:228px;height:10px;background:#bcd2f6"></div>
<div class="a" style="left:988px;top:80px;width:4px;height:550px;background:#bcd2f6"></div>
<div class="a" style="left:764px;top:442px;width:224px;height:20px;background:linear-gradient(180deg,#c9dcf9 0%,#b4ccf4 40%,#94b4ec 100%)"></div>
<div class="t" style="left:779px;top:445px;letter-spacing:-0.230px;">Overview</div>
<svg style="left:965px;top:447px" width="10" height="10" viewBox="0 0 10 10"><path d="M3 0.5 H9.500 V6" stroke="#000" fill="none"/><rect x="0.5" y="3.500" width="6" height="5" fill="none" stroke="#000"/></svg>
<div class="a" style="left:764px;top:461px;width:224px;height:166px;background:#fff"></div>
<svg style="left:764px;top:461px" width="224" height="166" viewBox="764 461 224 166"><defs><pattern id="tx" width="7" height="1.700" patternUnits="userSpaceOnUse"><rect x="1" y="0.7" width="4.200" height="0.55" fill="#6e6b50" opacity="0.6"/></pattern></defs><rect x="841" y="462" width="145" height="111" fill="#ffe0ff"/><rect x="848.3" y="470.3" width="20.6" height="27.5" fill="#fcf8c4" stroke="#a9a58a" stroke-width="0.5"/><path d="M856.5 471.4 h7.2 M850.3 472.9 h10.2 M850.3 474.8 h8.6 M850.3 476.6 h13.2 M850.3 478.5 h7.9 M850.3 480.3 h12.2 M850.3 482.2 h10.6 M850.3 484.0 h7.7 M850.3 485.9 h11.9 M850.3 487.7 h7.6 M850.3 489.6 h11.2 M850.3 491.4 h7.9 M850.3 493.3 h8.1 M850.3 495.1 h11.1 M850.3 497.0 h14.9" stroke="#5f5c46" stroke-width="0.55" opacity="0.6" fill="none"/><rect x="922.3" y="468.4" width="19.4" height="8.1" fill="#fcf8c4" stroke="#a9a58a" stroke-width="0.5"/><path d="M930.1 469.5 h6.8 M924.3 471.0 h7.9 M924.3 472.9 h8.7 M924.3 474.7 h12.3" stroke="#5f5c46" stroke-width="0.55" opacity="0.6" fill="none"/><rect x="962.5" y="465.4" width="18.7" height="24.3" fill="#fcf8c4" stroke="#a9a58a" stroke-width="0.5"/><path d="M970.0 466.5 h6.5 M964.5 468.0 h14.5 M964.5 469.9 h11.4 M964.5 471.7 h9.9 M964.5 473.6 h14.8 M964.5 475.4 h6.9 M964.5 477.3 h13.8 M964.5 479.1 h9.0 M964.5 481.0 h7.8 M964.5 482.8 h7.5 M964.5 484.7 h9.1 M964.5 486.5 h13.4 M964.5 488.4 h8.1" stroke="#5f5c46" stroke-width="0.55" opacity="0.6" fill="none"/><rect x="926.2" y="484.4" width="13.4" height="7.1" fill="#fcf8c4" stroke="#a9a58a" stroke-width="0.5"/><path d="M931.6 485.5 h4.7 M928.2 487.0 h8.2 M928.2 488.9 h8.5" stroke="#5f5c46" stroke-width="0.55" opacity="0.6" fill="none"/><rect x="896.2" y="499.4" width="12.7" height="11.1" fill="#fcf8c4" stroke="#a9a58a" stroke-width="0.5"/><path d="M901.3 500.5 h4.4 M898.2 502.0 h6.6 M898.2 503.9 h7.6 M898.2 505.7 h4.8 M898.2 507.6 h4.8 M898.2 509.4 h5.6" stroke="#5f5c46" stroke-width="0.55" opacity="0.6" fill="none"/><rect x="954.4" y="500.5" width="20.3" height="19.2" fill="#fcf8c4" stroke="#a9a58a" stroke-width="0.5"/><path d="M962.5 501.6 h7.1 M956.4 503.1 h13.3 M956.4 505.0 h11.0 M956.4 506.8 h10.0 M956.4 508.7 h12.5 M956.4 510.5 h11.2 M956.4 512.4 h9.8 M956.4 514.2 h14.4 M956.4 516.1 h13.5 M956.4 517.9 h9.3" stroke="#5f5c46" stroke-width="0.55" opacity="0.6" fill="none"/><rect x="875.3" y="513.5" width="19.2" height="6.2" fill="#fcf8c4" stroke="#a9a58a" stroke-width="0.5"/><path d="M883.0 514.6 h6.7 M877.3 516.1 h11.7 M877.3 518.0 h11.3" stroke="#5f5c46" stroke-width="0.55" opacity="0.6" fill="none"/><rect x="928.5" y="522.5" width="16.9" height="6.0" fill="#fcf8c4" stroke="#a9a58a" stroke-width="0.5"/><path d="M935.3 523.6 h5.9 M930.5 525.1 h12.6 M930.5 527.0 h11.5" stroke="#5f5c46" stroke-width="0.55" opacity="0.6" fill="none"/><rect x="874.7" y="528.5" width="19.1" height="6.9" fill="#fcf8c4" stroke="#a9a58a" stroke-width="0.5"/><path d="M882.3 529.6 h6.7 M876.7 531.1 h9.2 M876.7 533.0 h15.1" stroke="#5f5c46" stroke-width="0.55" opacity="0.6" fill="none"/><rect x="844.6" y="539.4" width="19.2" height="27.0" fill="#fcf8c4" stroke="#a9a58a" stroke-width="0.5"/><path d="M852.3 540.5 h6.7 M846.6 542.0 h7.7 M846.6 543.9 h10.3 M846.6 545.7 h13.3 M846.6 547.6 h8.0 M846.6 549.4 h10.9 M846.6 551.3 h7.1 M846.6 553.1 h12.5 M846.6 555.0 h13.3 M846.6 556.8 h11.7 M846.6 558.7 h14.3 M846.6 560.5 h9.4 M846.6 562.4 h12.7 M846.6 564.2 h11.9" stroke="#5f5c46" stroke-width="0.55" opacity="0.6" fill="none"/><rect x="958.6" y="537.0" width="20.3" height="34.7" fill="#fcf8c4" stroke="#a9a58a" stroke-width="0.5"/><path d="M966.7 538.1 h7.1 M960.6 539.6 h12.4 M960.6 541.5 h11.3 M960.6 543.3 h14.8 M960.6 545.2 h15.7 M960.6 547.0 h11.4 M960.6 548.9 h13.2 M960.6 550.7 h7.7 M960.6 552.6 h13.5 M960.6 554.4 h13.0 M960.6 556.3 h16.2 M960.6 558.1 h14.6 M960.6 560.0 h9.7 M960.6 561.8 h10.6 M960.6 563.7 h13.2 M960.6 565.5 h7.3 M960.6 567.4 h11.3 M960.6 569.2 h8.6" stroke="#5f5c46" stroke-width="0.55" opacity="0.6" fill="none"/><rect x="887.4" y="554.4" width="19.4" height="7.4" fill="#fcf8c4" stroke="#a9a58a" stroke-width="0.5"/><path d="M895.2 555.5 h6.8 M889.4 557.0 h7.8 M889.4 558.9 h7.3 M889.4 560.7 h13.5" stroke="#5f5c46" stroke-width="0.55" opacity="0.6" fill="none"/><rect x="894.5" y="565.5" width="19.2" height="6.2" fill="#fcf8c4" stroke="#a9a58a" stroke-width="0.5"/><path d="M902.2 566.6 h6.7 M896.5 568.1 h7.8 M896.5 570.0 h8.9" stroke="#5f5c46" stroke-width="0.55" opacity="0.6" fill="none"/><rect x="934.5" y="560.2" width="19.0" height="9.2" fill="#fcf8c4" stroke="#a9a58a" stroke-width="0.5"/><path d="M942.1 561.3 h6.6 M936.5 562.8 h10.0 M936.5 564.7 h14.1 M936.5 566.5 h7.3 M936.5 568.4 h10.5" stroke="#5f5c46" stroke-width="0.55" opacity="0.6" fill="none"/><rect x="812.9" y="463.6" width="10.4" height="5.3" fill="#fcf8c4" stroke="#a9a58a" stroke-width="0.5"/><path d="M817.1 464.7 h3.6 M814.9 466.2 h6.2 M814.9 468.0 h7.8" stroke="#5f5c46" stroke-width="0.55" opacity="0.6" fill="none"/><rect x="815.2" y="478.1" width="13.4" height="6.9" fill="#fcf8c4" stroke="#a9a58a" stroke-width="0.5"/><path d="M820.6 479.2 h4.7 M817.2 480.7 h9.6 M817.2 482.6 h9.9" stroke="#5f5c46" stroke-width="0.55" opacity="0.6" fill="none"/><rect x="812.9" y="487.4" width="14.6" height="10.9" fill="#fcf8c4" stroke="#a9a58a" stroke-width="0.5"/><path d="M818.8 488.5 h5.1 M814.9 490.0 h6.9 M814.9 491.8 h7.8 M814.9 493.7 h7.4 M814.9 495.5 h10.9 M814.9 497.4 h11.4" stroke="#5f5c46" stroke-width="0.55" opacity="0.6" fill="none"/><rect x="812.9" y="505.4" width="14.6" height="10.9" fill="#fcf8c4" stroke="#a9a58a" stroke-width="0.5"/><path d="M818.8 506.5 h5.1 M814.9 508.0 h6.1 M814.9 509.8 h6.3 M814.9 511.7 h6.6 M814.9 513.5 h6.6 M814.9 515.4 h8.3" stroke="#5f5c46" stroke-width="0.55" opacity="0.6" fill="none"/><rect x="813.6" y="518.6" width="12.0" height="5.8" fill="#fcf8c4" stroke="#a9a58a" stroke-width="0.5"/><path d="M818.4 519.7 h4.2 M815.6 521.2 h7.4 M815.6 523.0 h5.6" stroke="#5f5c46" stroke-width="0.55" opacity="0.6" fill="none"/><rect x="827.5" y="518.1" width="6.9" height="6.2" fill="#fcf8c4" stroke="#a9a58a" stroke-width="0.5"/><path d="M830.3 519.2 h2.4 M829.5 520.7 h2.4 M829.5 522.6 h3.7" stroke="#5f5c46" stroke-width="0.55" opacity="0.6" fill="none"/><rect x="813.6" y="526.2" width="12.7" height="6.2" fill="#fcf8c4" stroke="#a9a58a" stroke-width="0.5"/><path d="M818.7 527.3 h4.4 M815.6 528.8 h6.6 M815.6 530.6 h7.7" stroke="#5f5c46" stroke-width="0.55" opacity="0.6" fill="none"/><rect x="813.6" y="534.8" width="17.8" height="8.8" fill="#fcf8c4" stroke="#a9a58a" stroke-width="0.5"/><path d="M820.7 535.9 h6.2 M815.6 537.4 h13.9 M815.6 539.2 h11.8 M815.6 541.1 h10.4" stroke="#5f5c46" stroke-width="0.55" opacity="0.6" fill="none"/><rect x="814.1" y="546.3" width="12.3" height="4.6" fill="#fcf8c4" stroke="#a9a58a" stroke-width="0.5"/><path d="M819.0 547.4 h4.3 M816.1 548.9 h7.7" stroke="#5f5c46" stroke-width="0.55" opacity="0.6" fill="none"/><rect x="817.1" y="553.9" width="9.7" height="4.4" fill="#fcf8c4" stroke="#a9a58a" stroke-width="0.5"/><path d="M821.0 555.0 h3.4 M819.1 556.5 h6.4" stroke="#5f5c46" stroke-width="0.55" opacity="0.6" fill="none"/><rect x="819.4" y="559.5" width="15.0" height="6.0" fill="#fcf8c4" stroke="#a9a58a" stroke-width="0.5"/><path d="M825.4 560.6 h5.3 M821.4 562.1 h5.6 M821.4 563.9 h11.3" stroke="#5f5c46" stroke-width="0.55" opacity="0.6" fill="none"/><rect x="819.4" y="566.7" width="14.3" height="3.9" fill="#fcf8c4" stroke="#a9a58a" stroke-width="0.5"/><path d="M825.1 567.8 h5.0 M821.4 569.3 h10.0" stroke="#5f5c46" stroke-width="0.55" opacity="0.6" fill="none"/><rect x="819.9" y="572.4" width="14.6" height="5.8" fill="#fcf8c4" stroke="#a9a58a" stroke-width="0.5"/><path d="M825.7 573.5 h5.1 M821.9 575.0 h10.8 M821.9 576.9 h10.3" stroke="#5f5c46" stroke-width="0.55" opacity="0.6" fill="none"/><rect x="819.4" y="578.7" width="18.3" height="6.5" fill="#fcf8c4" stroke="#a9a58a" stroke-width="0.5"/><path d="M826.7 579.8 h6.4 M821.4 581.3 h9.6 M821.4 583.1 h9.7" stroke="#5f5c46" stroke-width="0.55" opacity="0.6" fill="none"/><rect x="818.7" y="585.6" width="16.2" height="8.1" fill="#fcf8c4" stroke="#a9a58a" stroke-width="0.5"/><path d="M825.2 586.7 h5.7 M820.7 588.2 h6.4 M820.7 590.1 h10.3 M820.7 591.9 h6.1" stroke="#5f5c46" stroke-width="0.55" opacity="0.6" fill="none"/><path d="M869 476 H922 M857 498 V539 M869 492 H914 V554 H958 M909 505 H931 V504 H954 M933 491 V520 M947 498 V560 M885 520 V528 M860 539 V532 H875 M894 554 V541 H937 V529 M937 545 H958 M951 560 V520 H954 M970 490 V500 M903 562 V566" stroke="#8a8796" stroke-width="0.500" fill="none"/><rect x="816.5" y="553.5" width="23.500" height="18" fill="none" stroke="#f00" stroke-width="1.200"/><rect x="837" y="569" width="4" height="4" fill="#f00"/></svg>
<div class="a" style="left:4px;top:631px;width:988px;height:14px;background:#ece9d8"></div>
<div class="a" style="left:4px;top:630px;width:240px;height:1px;background:#3b4cae"></div>
<div class="t" style="left:8px;top:632px;letter-spacing:-0.073px;">Selected Objects: 0</div>
<div class="a" style="left:183px;top:34px;width:630px;height:580px;background:#0a3fe0;border-radius:8px 8px 0 0;overflow:hidden">
<div class="a" style="left:0;top:0;width:630px;height:30px;background:linear-gradient(180deg,#0048d0 0px,#0048d0 1px,#3a8cff 1.5px,#2a7cf8 3px,#0a5fe8 4.500px,#0056e2 6px,#0054e0 16px,#0060f0 22px,#0068fc 26px,#0058ec 27.5px,#0036c4 29px,#0030c0 30px)"></div>
<div class="a" style="left:0;top:30px;width:4px;height:550px;background:linear-gradient(90deg,#0014c8,#0030e0 30%,#0a50ec 60%,#1262f0)"></div>
<div class="a" style="left:626px;top:30px;width:4px;height:550px;background:linear-gradient(90deg,#0a50f0,#0040e8 35%,#0020c0 70%,#000f8c)"></div>
<div class="a" style="left:0;top:576px;width:630px;height:4px;background:linear-gradient(180deg,#0a50f0,#0040e8 35%,#0020c0 70%,#000f8c)"></div>
<div class="a" style="left:4px;top:30px;width:622px;height:546px;background:#ece9d8"></div>
</div>
<svg style="left:190px;top:44px" width="14" height="13" viewBox="0 0 14 13">
<defs><linearGradient id="aig2" x1="0" y1="0" x2="1" y2="0"><stop offset="0" stop-color="#5ab8f0"/><stop offset="1" stop-color="#ffffff"/></linearGradient></defs>
<rect x="0" y="0" width="14" height="3" fill="#6f9fcc"/>
<rect x="1" y="1" width="12" height="1" fill="url(#aig2)"/>
<rect x="0" y="3" width="14" height="10" fill="#c8a040"/>
<rect x="1" y="3" width="12" height="9" fill="#e8f8fc"/>
<path d="M3 6 L6 9 M8 7 L11 9 M8 10 H10" stroke="#2a62a8" stroke-width="1" stroke-dasharray="1 1" fill="none"/>
<rect x="1" y="3" width="3" height="3" fill="#0a4a9c"/><rect x="2" y="4" width="1" height="1" fill="#fff"/>
<rect x="6" y="4" width="3" height="3" fill="#0a4a9c"/><rect x="7" y="5" width="1" height="1" fill="#fff"/>
<rect x="5" y="8.500" width="3" height="3" fill="#0a4a9c"/><rect x="6" y="9.500" width="1" height="1" fill="#fff"/>
<rect x="10" y="8" width="3" height="3" fill="#0a4a9c"/><rect x="11" y="9" width="1" height="1" fill="#fff"/>
</svg>
<div class="t" style="left:209px;top:44px;font-size:13px;font-weight:bold;color:#fff;letter-spacing:0;height:16px;line-height:16px;text-shadow:1px 1px 0 #0a2a8c">New Index</div>
<div class="a" style="left:786px;top:40px;width:21px;height:21px;background:linear-gradient(135deg,#ee8a6c,#e2562e 40%,#cf4218);border:1px solid #fff;border-radius:3px;"></div>
<svg style="left:791px;top:45px" width="11" height="11" viewBox="0 0 11 11"><path d="M1 1 L10 10 M10 1 L1 10" stroke="#fff" stroke-width="2" fill="none"/></svg>
<div class="a" style="left:197px;top:96px;width:603px;height:471px;background:#ece9d8;border:1px solid #3c4aa0;"></div>
<div class="a" style="left:198px;top:97px;width:601px;height:469px;border:2px solid #fbaf5a;"></div>
<div class="a" style="left:200px;top:99px;width:597px;height:465px;border-left:1px solid #f4d9b6;border-top:1px solid #f4d9b6"></div>
<div class="a" style="left:187px;top:96px;width:11px;height:1px;background:#3c4aa0"></div>
<svg style="left:197px;top:74px" width="215" height="26" viewBox="197 74 215 26">
<defs><linearGradient id="tg" x1="0" y1="0" x2="0" y2="1"><stop offset="0" stop-color="#fdd9a8"/><stop offset="0.5" stop-color="#fcc47f"/><stop offset="1" stop-color="#fbaf5a"/></linearGradient>
<linearGradient id="tb" x1="0" y1="0" x2="0" y2="1"><stop offset="0" stop-color="#c9dafa"/><stop offset="0.5" stop-color="#b4c9f4"/><stop offset="1" stop-color="#9cb8ee"/></linearGradient></defs>
<path d="M299.500 96.500 V80 q0 -3.500 3.500 -3.500 H400 q3.500 0 3.500 3.500 V96.500 z" fill="url(#tb)" stroke="#3c4aa0"/>
<path d="M197.500 96.500 H201.500 L221 79 q2.500 -2.500 5.500 -2.500 H296 q3 0 3 3 V99 H198.500 z" fill="url(#tg)"/>
<path d="M197.500 96.500 H201.500 L221 79 q2.500 -2.500 5.500 -2.500 H296 q3 0 3 3 V96.500" fill="none" stroke="#3c4aa0"/>
</svg>
<svg style="left:224px;top:78px" width="16" height="14" viewBox="0 0 16 14">
<rect x="2.500" y="0.5" width="12" height="10" fill="#fff" stroke="#8a6a2c"/>
<rect x="3" y="1" width="11" height="2" fill="#c97a2a"/>
<path d="M3 3.500 H14 M3 6.500 H14 M6.500 1 V10 M10.500 1 V10" stroke="#8d8470" stroke-width="1" fill="none"/>
<circle cx="4" cy="9.500" r="3.500" fill="#4fae5a" stroke="#2f8a3c"/>
</svg>
<div class="t" style="left:246px;top:80px;letter-spacing:-0.304px;">General</div>
<svg style="left:306px;top:79px" width="14" height="15" viewBox="0 0 14 15">
<path d="M1 2.500 q0 -2 4 -2 q4 0 4 2 v8 q0 2 -4 2 q-4 0 -4 -2 z" fill="#f5c84a" stroke="#b8860b"/>
<path d="M4.500 4.500 q0 -1 1 -1 h6 q1 0 1 1 v7.500 q0 1.500 -1.500 1.500 h-6 q-1.500 0 -1.500 -1.500 h2 z" fill="#fff" stroke="#6a6a78"/>
<path d="M6.500 6.500 h4 M6.500 8.500 h4 M6.500 10.500 h3" stroke="#5a5a9a"/>
</svg>
<div class="t" style="left:328px;top:80px;letter-spacing:-0.435px;">SQL Preview</div>
<div class="t" style="left:209px;top:113px;letter-spacing:-0.279px;">Name:</div>
<div class="a" style="left:270px;top:109px;width:516px;height:20px;background:#fff;border:1px solid #7f9db9"></div>
<div class="a" style="left:273px;top:112px;width:53px;height:14px;background:#316ac5"></div>
<div class="t" style="left:273px;top:113px;letter-spacing:-0.084px;color:#fff">andyIndex</div>
<div class="t" style="left:209px;top:138px;letter-spacing:-0.016px;">Database:</div>
<div class="a" style="left:270px;top:134px;width:516px;height:20px;background:#fff;border:1px solid #7f9db9"></div>
<div class="t" style="left:273px;top:138px;letter-spacing:-0.058px;">Northwind</div>
<div class="t" style="left:209px;top:163px;letter-spacing:-0.344px;">Schema:</div>
<div class="a" style="left:270px;top:159px;width:516px;height:20px;background:#fff;border:1px solid #7f9db9"></div>
<div class="t" style="left:273px;top:163px;letter-spacing:-0.117px;">dbo</div>
<div class="t" style="left:209px;top:188px;letter-spacing:0.108px;">Table:</div>
<div class="a" style="left:270px;top:184px;width:516px;height:20px;background:#fff;border:1px solid #7f9db9"></div>
<div class="t" style="left:273px;top:188px;letter-spacing:-0.213px;">andy</div>
<div class="a" style="left:769px;top:186px;width:15px;height:16px;background:linear-gradient(135deg,#cfdbfd,#bccdf9 50%,#adc4f7);border-radius:2px"></div>
<svg style="left:772px;top:191px" width="9" height="7" viewBox="0 0 9 7"><path d="M1 1 L4.500 4.500 L8 1" stroke="#4d6185" stroke-width="2" fill="none"/></svg>
<div class="t" style="left:210px;top:210px;letter-spacing:-0.240px;">Indexed Columns</div>
<div class="a" style="left:210px;top:228px;width:576px;height:181px;background:#fff;border:1px solid #7f9db9"></div>
<div class="a" style="left:211px;top:229px;width:574px;height:20px;background:linear-gradient(180deg,#ece9d8 0,#ece9d8 16px,#e4e0cc 17px,#d8d4c0 18px,#ccc8b4 19px,#ccc8b4 20px)"></div>
<div class="a" style="left:211px;top:249px;width:50px;height:159px;background:#ece9d8"></div>
<div class="a" style="left:259px;top:232px;width:1px;height:14px;background:#c7c5b2"></div>
<div class="a" style="left:260px;top:232px;width:1px;height:14px;background:#fff"></div>
<div class="a" style="left:491px;top:232px;width:1px;height:14px;background:#c7c5b2"></div>
<div class="a" style="left:492px;top:232px;width:1px;height:14px;background:#fff"></div>
<div class="a" style="left:601px;top:232px;width:1px;height:14px;background:#c7c5b2"></div>
<div class="a" style="left:602px;top:232px;width:1px;height:14px;background:#fff"></div>
<div class="a" style="left:675px;top:232px;width:1px;height:14px;background:#c7c5b2"></div>
<div class="a" style="left:676px;top:232px;width:1px;height:14px;background:#fff"></div>
<div class="a" style="left:782px;top:232px;width:1px;height:14px;background:#c7c5b2"></div>
<div class="a" style="left:783px;top:232px;width:1px;height:14px;background:#fff"></div>
<div class="t" style="left:269px;top:233px;letter-spacing:-0.482px;">Column Name</div>
<div class="t" style="left:501px;top:233px;letter-spacing:-0.104px;">Data Type</div>
<div class="t" style="left:610px;top:233px;letter-spacing:-0.318px;">Sequence</div>
<div class="t" style="left:684px;top:233px;letter-spacing:-0.023px;">Order</div>
<div class="a" style="left:260px;top:265px;width:525px;height:1px;background:#ece9d8"></div>
<div class="a" style="left:260px;top:281px;width:525px;height:1px;background:#ece9d8"></div>
<div class="a" style="left:493px;top:249px;width:1px;height:33px;background:#ece9d8"></div>
<div class="a" style="left:602px;top:249px;width:1px;height:33px;background:#ece9d8"></div>
<div class="a" style="left:676px;top:249px;width:1px;height:33px;background:#ece9d8"></div>
<div class="a" style="left:211px;top:249px;width:50px;height:16px;background:linear-gradient(180deg,#ece9d8 0,#ece9d8 12px,#dedac8 13px,#cfcab6 14px,#c2bda8 15px,#c2bda8 16px)"></div>
<div class="t" style="left:232px;top:251px;">1</div>
<div class="a" style="left:211px;top:265px;width:50px;height:16px;background:linear-gradient(180deg,#ece9d8 0,#ece9d8 12px,#dedac8 13px,#cfcab6 14px,#c2bda8 15px,#c2bda8 16px)"></div>
<div class="t" style="left:232px;top:267px;">2</div>
<div class="t" style="left:261px;top:251px;letter-spacing:-0.368px;">column1</div>
<div class="t" style="left:261px;top:267px;letter-spacing:-0.368px;">column2</div>
<div class="t" style="left:494px;top:251px;letter-spacing:-0.097px;">varchar</div>
<div class="t" style="left:494px;top:267px;letter-spacing:-0.097px;">varchar</div>
<div class="a" style="left:604px;top:250px;width:72px;height:15px;background:#93afe2"></div>
<div class="t" style="left:636px;top:251px;color:#fff">1</div>
<div class="t" style="left:677px;top:251px;letter-spacing:-0.878px;">ASCENDING</div>
<div class="t" style="left:210px;top:415px;letter-spacing:-0.130px;">Options</div>
<div class="a" style="left:210px;top:433px;width:576px;height:121px;background:#fff;border:1px solid #aca899;border-top-color:#a09d8f;border-left-color:#a09d8f"></div>
<div class="a" style="left:211px;top:434px;width:574px;height:16px;background:#f9f9ec;border-bottom:1px solid #ece9d8"></div>
<div class="a" style="left:211px;top:434px;width:17px;height:16px;background:#ece9d8"></div>
<div class="a" style="left:497px;top:434px;width:1px;height:16px;background:#ece9d8"></div>
<div class="t" style="left:229px;top:435px;letter-spacing:-0.119px;">Clustered</div>
<div class="a" style="left:499px;top:435px;width:13px;height:13px;border:1px solid #1c5180;background:linear-gradient(135deg,#dcdcd7,#fff)"></div>
<div class="a" style="left:211px;top:450px;width:574px;height:16px;background:#fff;border-bottom:1px solid #ece9d8"></div>
<div class="a" style="left:211px;top:450px;width:17px;height:16px;background:#ece9d8"></div>
<div class="a" style="left:497px;top:450px;width:1px;height:16px;background:#ece9d8"></div>
<div class="t" style="left:229px;top:451px;letter-spacing:-0.029px;">Fill Factor (%)</div>
<div class="a" style="left:211px;top:466px;width:574px;height:16px;background:#f9f9ec;border-bottom:1px solid #ece9d8"></div>
<div class="a" style="left:211px;top:466px;width:17px;height:16px;background:#ece9d8"></div>
<div class="a" style="left:497px;top:466px;width:1px;height:16px;background:#ece9d8"></div>
<div class="t" style="left:229px;top:467px;letter-spacing:-0.171px;">Pad Index</div>
<div class="a" style="left:499px;top:467px;width:13px;height:13px;border:1px solid #1c5180;background:linear-gradient(135deg,#dcdcd7,#fff)"></div>
<div class="a" style="left:211px;top:482px;width:574px;height:16px;background:#fff;border-bottom:1px solid #ece9d8"></div>
<div class="a" style="left:211px;top:482px;width:17px;height:16px;background:#ece9d8"></div>
<div class="a" style="left:497px;top:482px;width:1px;height:16px;background:#ece9d8"></div>
<div class="t" style="left:229px;top:483px;letter-spacing:-0.309px;">Unique</div>
<div class="a" style="left:499px;top:483px;width:13px;height:13px;border:1px solid #1c5180;background:linear-gradient(135deg,#dcdcd7,#fff)"></div>
<div class="a" style="left:217px;top:441px;width:2px;height:50px;background:#d4d0c4"></div>
<div class="a" style="left:217px;top:441px;width:10px;height:2px;background:#d4d0c4"></div>
<div class="a" style="left:217px;top:457px;width:10px;height:2px;background:#d4d0c4"></div>
<div class="a" style="left:217px;top:473px;width:10px;height:2px;background:#d4d0c4"></div>
<div class="a" style="left:217px;top:489px;width:10px;height:2px;background:#d4d0c4"></div>
<div class="a" style="left:644px;top:578px;width:73px;height:21px;background:linear-gradient(180deg,#fff 0%,#f6f5ee 60%,#e2dfd2 100%);border:1px solid #003c74;border-radius:3px;text-align:center;line-height:18px;box-shadow:inset 0 0 0 2px #a9c0f2;">OK</div>
<div class="a" style="left:725px;top:578px;width:73px;height:21px;background:linear-gradient(180deg,#fff 0%,#f6f5ee 60%,#e2dfd2 100%);border:1px solid #003c74;border-radius:3px;text-align:center;line-height:18px;">Cancel</div>
</div></body></html>
